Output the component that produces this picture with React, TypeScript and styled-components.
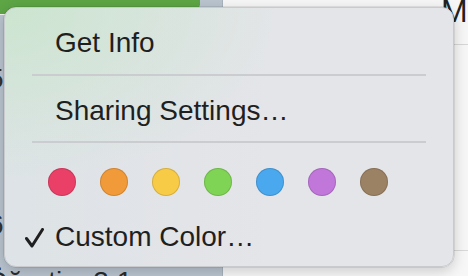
import styled, { createGlobalStyle } from "styled-components";

const GlobalStyle = createGlobalStyle`
  html, body {
    margin: 0;
    padding: 0;
    width: 468px;
    height: 276px;
    overflow: hidden;
    background: #f5f5f5;
  }
  * {
    box-sizing: border-box;
  }
`;

const colors = [
  "#ea4068",
  "#f19a39",
  "#f8cb47",
  "#80d455",
  "#4aa8ee",
  "#c077d9",
  "#9c8264",
];

export default function App() {
  return (
    <>
      <GlobalStyle />
      <Window>
        <Sidebar>
          <SelectedRow />
          <SideLabel $top={50}>5</SideLabel>
          <SideLabel $top={118}>6</SideLabel>
          <SideBottom>Öğretim 3.1</SideBottom>
        </Sidebar>
        <Main>
          <Header>
            <Title>M</Title>
          </Header>
          <Body />
          <Footer />
        </Main>

        <Menu>
          <Item>
            <CheckSlot />
            Get Info
          </Item>
          <Separator />
          <Item $top={13}>
            <CheckSlot />
            Sharing Settings…
          </Item>
          <Separator $top={8} />
          <Swatches>
            {colors.map((c) => (
              <Swatch key={c} $color={c} />
            ))}
          </Swatches>
          <Item $top={19}>
            <CheckSlot>
              <svg width="19" height="20" viewBox="0 0 19 20">
                <path
                  d="M1.5 10.5 L7 18 L17.5 1.5"
                  fill="none"
                  stroke="#1f1f1f"
                  strokeWidth="3"
                  strokeLinecap="round"
                  strokeLinejoin="round"
                />
              </svg>
            </CheckSlot>
            Custom Color…
          </Item>
        </Menu>
      </Window>
    </>
  );
}

const Window = styled.div`
  position: relative;
  width: 468px;
  height: 276px;
  display: flex;
  overflow: hidden;
  font-family: "Liberation Sans", Arial, sans-serif;
`;

const Sidebar = styled.div`
  width: 223px;
  height: 100%;
  background: #b9c4cf;
  border-right: 1px solid #a9b3bd;
  display: flex;
  flex-direction: column;
`;

const SelectedRow = styled.div`
  width: 200px;
  height: 15px;
  flex-shrink: 0;
  background: #5da545;
  border-bottom: 1px solid #f2f5f2;
  border-bottom-right-radius: 10px;
`;

const SideLabel = styled.div<{ $top: number }>`
  margin-top: ${(p) => p.$top}px;
  margin-left: -12px;
  font-size: 28px;
  line-height: 28px;
  color: #333;
`;

const SideBottom = styled.div`
  margin-top: auto;
  margin-left: -14px;
  margin-bottom: -20px;
  font-size: 28px;
  line-height: 28px;
  color: #2a2a2a;
`;

const Main = styled.div`
  flex: 1;
  display: flex;
  flex-direction: column;
  background: #f6f6f6;
`;

const Header = styled.div`
  height: 45px;
  border-bottom: 1px solid #d6d6d6;
  padding-left: 218px;
  overflow: hidden;
`;

const Title = styled.div`
  margin-top: -5px;
  font-size: 32px;
  line-height: 32px;
  color: #222;
  white-space: nowrap;
`;

const Body = styled.div`
  height: 206px;
  border-bottom: 1px solid #d8d8d8;
`;

const Footer = styled.div`
  flex: 1;
  background: #f7f7f7;
`;

const Menu = styled.div`
  position: absolute;
  left: 4px;
  top: 7px;
  width: 450px;
  height: 260px;
  border-radius: 12px;
  border: 1px solid #c9cacd;
  padding-top: 13px;
  background:
    radial-gradient(
      ellipse 280px 170px at 0 0,
      rgba(203, 229, 206, 0.95),
      rgba(203, 229, 206, 0) 100%
    ),
    linear-gradient(90deg, #dde3e6 0%, #e2e4e8 40%, #e4e5e9 60%);
  box-shadow: 0 0 0 0.5px rgba(0, 0, 0, 0.15), 0 4px 14px rgba(0, 0, 0, 0.18);
  display: flex;
  flex-direction: column;
  color: #1f1f1f;
`;

const Item = styled.div<{ $top?: number }>`
  height: 44px;
  margin-top: ${(p) => p.$top ?? 0}px;
  padding-left: 20px;
  display: flex;
  align-items: center;
  font-size: 28px;
  line-height: 44px;
  white-space: nowrap;
`;

const CheckSlot = styled.span`
  width: 30px;
  height: 44px;
  display: flex;
  align-items: center;
  padding-top: 1px;
`;

const Separator = styled.div<{ $top?: number }>`
  height: 2px;
  margin: ${(p) => p.$top ?? 9}px 27px 0 27px;
  background: #cbccd0;
`;

const Swatches = styled.div`
  display: flex;
  gap: 24px;
  margin-top: 25px;
  padding-left: 43px;
`;

const Swatch = styled.div<{ $color: string }>`
  width: 28px;
  height: 28px;
  border-radius: 50%;
  background: ${(p) => p.$color};
  box-shadow: inset 0 0 0 1px rgba(0, 0, 0, 0.14);
`;
